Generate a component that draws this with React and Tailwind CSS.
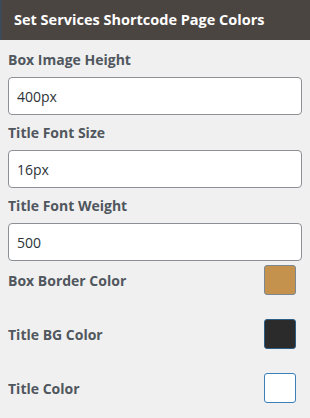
import React from 'react';

const textFields = [
  { label: 'Box Image Height', value: '400px' },
  { label: 'Title Font Size', value: '16px' },
  { label: 'Title Font Weight', value: '500' },
];

const colorFields = [
  { label: 'Box Border Color', color: 'bg-[#c4924d]', border: 'border-[#7b8791]' },
  { label: 'Title BG Color', color: 'bg-[#2b2b2b]', border: 'border-[#2c5d86]' },
  { label: 'Title Color', color: 'bg-white', border: 'border-[#3b7fb8]' },
];

export default function App() {
  return (
    <div className="w-[310px] h-[418px] bg-[#f0f0f0] font-['Open_Sans',sans-serif] overflow-hidden">
      {/* Header */}
      <div className="h-10 bg-[#4b4542] border-l-2 border-[#3d4a55] flex items-center pl-3">
        <h2 className="text-white text-[14.5px] font-bold">Set Services Shortcode Page Colors</h2>
      </div>

      <div className="px-2 pt-[10px]">
        <div className="flex flex-col gap-[8px]">
          {textFields.map((f) => (
            <div key={f.label}>
              <label className="block text-[14px] font-bold text-[#50575e] leading-5 mb-[7px]">{f.label}</label>
              <input
                readOnly
                value={f.value}
                className="w-full h-[38px] bg-white border border-[#8c8f94] rounded-[4px] px-2 text-[14px] text-[#2c3338] outline-none"
              />
            </div>
          ))}
        </div>

        <div className="pt-[4px] flex flex-col gap-[24px]">
          {colorFields.map((f) => (
            <div key={f.label} className="flex items-center justify-between h-[30px]">
              <span className="text-[14px] font-bold text-[#50575e]">{f.label}</span>
              <div className={`w-8 h-[30px] rounded-[3px] border mr-[6px] ${f.color} ${f.border}`} />
            </div>
          ))}
        </div>
      </div>
    </div>
  );
}
